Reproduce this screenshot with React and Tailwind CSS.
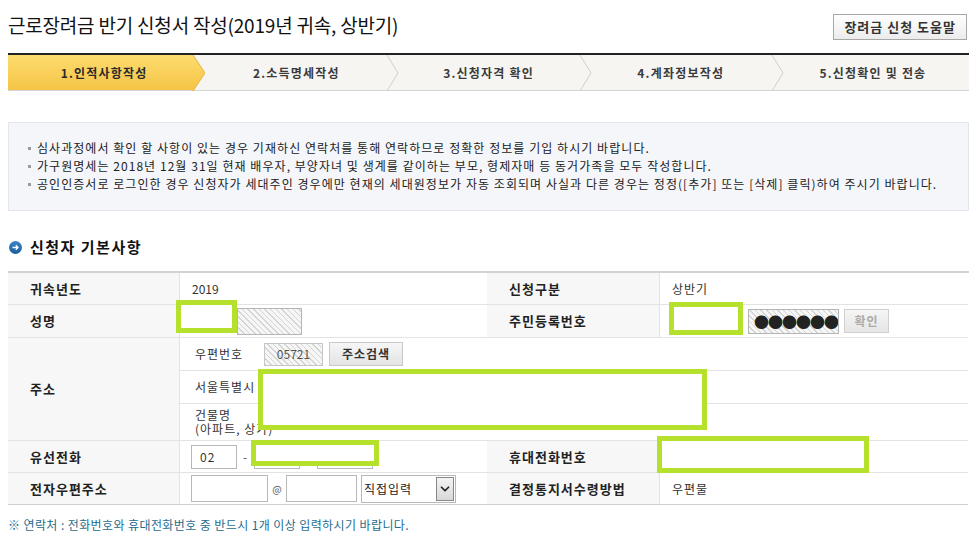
import { ChevronDown } from 'lucide-react';

const font = { fontFamily: '"Noto Sans CJK KR", "Noto Sans", sans-serif' };

const steps = ['1.인적사항작성', '2.소득명세작성', '3.신청자격 확인', '4.계좌정보작성', '5.신청확인 및 전송'];

const hatch =
  'bg-[repeating-linear-gradient(45deg,#d4d4d4_0px,#d4d4d4_1px,#f6f6f6_1px,#f6f6f6_4px)]';

function GreenBox({ className }) {
  return <div className={`absolute border-[5px] border-[#b5e02b] bg-white ${className}`} />;
}

function Label({ children, className = '' }) {
  return (
    <div className={`flex items-center pl-[22px] bg-[#f7f7f7] text-[13px] font-bold tracking-[1px] text-[#222] border-b border-[#e3e3e3] ${className}`}>
      {children}
    </div>
  );
}

function Value({ children, className = '' }) {
  return (
    <div className={`flex items-center px-3 bg-white text-[12px] tracking-[1px] text-[#333] border-b border-[#e3e3e3] ${className}`}>
      {children}
    </div>
  );
}

export default function App() {
  return (
    <div className="relative w-[977px] h-[548px] bg-white overflow-hidden" style={font}>
      {/* Title */}
      <div className="flex items-start justify-between pl-2 pr-[10px] pt-[11px] h-[53px]">
        <h1 className="text-[19px] leading-[28px] text-[#111] tracking-[-0.2px]">
          근로장려금 반기 신청서 작성(2019년 귀속, 상반기)
        </h1>
        <button className="mt-[3px] h-[26px] px-[10px] border border-[#a8a8a8] bg-gradient-to-b from-white to-[#ececec] text-[13px] font-bold text-[#333] tracking-[1px]">
          장려금 신청 도움말
        </button>
      </div>

      {/* Steps */}
      <div className="mx-2 flex h-[38px] border-t-2 border-[#222] border-b border-b-[#d5d5d5] bg-[#f6f5f1]">
        {steps.map((s, i) => (
          <div key={s} className="relative flex-1 flex items-center justify-center">
            {i === 0 && (
              <div className="absolute inset-0 right-[8px] bg-gradient-to-b from-[#fddc6e] to-[#f4c445]" />
            )}
            {i === 0 ? (
              <svg className="absolute top-0 right-[-5px] z-10" width="13" height="36" viewBox="0 0 13 36">
                <defs>
                  <linearGradient id="yg" x1="0" y1="0" x2="0" y2="1">
                    <stop offset="0" stopColor="#fddc6e" />
                    <stop offset="1" stopColor="#f4c445" />
                  </linearGradient>
                </defs>
                <polygon points="0,0 1,0 13,18 1,36 0,36" fill="url(#yg)" />
                <polyline points="1,0 13,18 1,36" fill="none" stroke="#e6b43a" strokeWidth="1" />
              </svg>
            ) : (
              i < 4 && (
                <svg className="absolute top-0 right-[-7px] z-10" width="13" height="36" viewBox="0 0 13 36">
                  <polyline points="1,0 12,18 1,36" fill="none" stroke="#cfcfcf" strokeWidth="1" />
                </svg>
              )
            )}
            <span className={`relative text-[12px] font-bold tracking-[1.2px] ${i === 0 ? 'text-[#2a2a2a]' : 'text-[#3a3a3a]'}`}>{s}</span>
          </div>
        ))}
      </div>

      {/* Info box */}
      <div className="mx-2 mt-[31px] h-[89px] border border-[#e3e6ec] bg-[#f4f6fa] pt-[16px] pl-[19px] text-[12px] leading-[18px] tracking-[1.05px] text-[#222]">
        {[
          '심사과정에서 확인 할 사항이 있는 경우 기재하신 연락처를 통해 연락하므로 정확한 정보를 기입 하시기 바랍니다.',
          '가구원명세는 2018년 12월 31일 현재 배우자, 부양자녀 및 생계를 같이하는 부모, 형제자매 등 동거가족을 모두 작성합니다.',
          '공인인증서로 로그인한 경우 신청자가 세대주인 경우에만 현재의 세대원정보가 자동 조회되며 사실과 다른 경우는 정정([추가] 또는 [삭제] 클릭)하여 주시기 바랍니다.',
        ].map((t) => (
          <div key={t} className="flex items-center gap-[6px] whitespace-nowrap">
            <span className="w-[3px] h-[3px] bg-[#9a9a9a]" />
            <span>{t}</span>
          </div>
        ))}
      </div>

      {/* Section heading */}
      <div className="flex items-center gap-[8px] pl-[9px] mt-[27px] h-[18px]">
        <span className="flex items-center justify-center w-[13px] h-[13px] rounded-full bg-gradient-to-b from-[#3b86c6] to-[#1b5d9c]">
          <svg width="7" height="7" viewBox="0 0 7 7">
            <path d="M0.5 3.5 H6 M3.8 1.3 L6 3.5 L3.8 5.7" stroke="white" strokeWidth="1.3" fill="none" />
          </svg>
        </span>
        <span className="text-[15px] font-bold tracking-[1.5px] text-[#111]">신청자 기본사항</span>
      </div>

      {/* Table */}
      <div className="mx-2 mt-[15px] grid grid-cols-[172px_307px_173px_308px] border-t-2 border-[#d2d2d2]">
        <Label className="h-[32px] border-r border-r-[#e3e3e3]">귀속년도</Label>
        <Value className="h-[32px] tracking-normal">2019</Value>
        <Label className="h-[32px] border-r border-r-[#e3e3e3]">신청구분</Label>
        <Value className="h-[32px]">상반기</Value>

        <Label className="h-[33px] border-r border-r-[#e3e3e3]">성명</Label>
        <Value className="h-[33px]">
          <div className="w-[45px] h-[27px]" />
          <div className={`w-[65px] h-[27px] border border-[#b5b5b5] ${hatch}`} />
        </Value>
        <Label className="h-[33px] border-r border-r-[#e3e3e3]">주민등록번호</Label>
        <Value className="h-[33px] gap-[5px]">
          <div className="w-[71px] h-[25px]" />
          <div className={`w-[91px] h-[25px] border border-[#b5b5b5] ${hatch} overflow-hidden whitespace-nowrap flex items-center pl-[5px] text-[15px] leading-none text-[#222] tracking-[-1px]`}>
            ●●●●●●
          </div>
          <div className="w-[45px] h-[24px] border border-[#d0d0d0] bg-gradient-to-b from-[#f5f5f5] to-[#e6e6e6] flex items-center justify-center text-[12px] font-bold text-[#aaa]">
            확인
          </div>
        </Value>

        <Label className="h-[103px] border-r border-r-[#e3e3e3]">주소</Label>
        <div className="col-span-3 flex flex-col">
          <Value className="h-[33px] pl-[15px]">
            <span className="w-[69px]">우편번호</span>
            <div className={`w-[59px] h-[23px] border border-[#c6c6c6] ${hatch} flex items-center justify-center text-[12px] tracking-normal text-[#555]`}>
              05721
            </div>
            <div className="ml-[6px] w-[74px] h-[24px] border border-[#c8c8c8] bg-gradient-to-b from-[#f6f6f6] to-[#e4e4e4] flex items-center justify-center text-[12px] font-bold text-[#333]">
              주소검색
            </div>
          </Value>
          <Value className="h-[33px] pl-[15px]">서울특별시</Value>
          <Value className="h-[37px] pl-[15px]">
            <div className="leading-[14px]">
              건물명
              <br />
              (아파트, 상가)
            </div>
          </Value>
        </div>

        <Label className="h-[32px] border-r border-r-[#e3e3e3]">유선전화</Label>
        <Value className="h-[32px] pl-[11px]">
          <div className="w-[46px] h-[24px] border border-[#b8b8b8] flex items-center pl-[8px]">02</div>
          <span className="mx-[6px] text-[#555]">-</span>
          <div className="w-[46px] h-[24px] border border-[#b8b8b8]" />
          <span className="mx-[6px] text-[#555]">-</span>
          <div className="w-[56px] h-[24px] border border-[#b8b8b8]" />
        </Value>
        <Label className="h-[32px] border-r border-r-[#e3e3e3]">휴대전화번호</Label>
        <Value className="h-[32px]" />

        <Label className="h-[32px] border-r border-r-[#e3e3e3] border-b-[#cfcfcf]">전자우편주소</Label>
        <Value className="h-[32px] pl-[11px] border-b-[#cfcfcf]">
          <div className="w-[77px] h-[27px] border border-[#b8b8b8]" />
          <span className="w-[18px] text-center text-[10px] tracking-normal text-[#555]">@</span>
          <div className="w-[71px] h-[27px] border border-[#b8b8b8]" />
          <div className="ml-[4px] w-[95px] h-[28px] border border-[#b8b8b8] flex items-center">
            <span className="flex-1 pl-[2px] text-[12px] text-[#222]">직접입력</span>
            <span className="w-[18px] h-[24px] mr-[1px] border border-[#888] bg-gradient-to-b from-[#f4f4f4] to-[#d8d8d8] flex items-center justify-center">
              <ChevronDown size={14} strokeWidth={3} className="text-[#222]" />
            </span>
          </div>
        </Value>
        <Label className="h-[32px] border-r border-r-[#e3e3e3] border-b-[#cfcfcf]">결정통지서수령방법</Label>
        <Value className="h-[32px] border-b-[#cfcfcf]">우편물</Value>
      </div>

      <p className="ml-2 mt-[11px] text-[12px] tracking-[0.4px] text-[#1f6c8c]">
        ※ 연락처 : 전화번호와 휴대전화번호 중 반드시 1개 이상 입력하시기 바랍니다.
      </p>

      {/* Redaction overlays */}
      <GreenBox className="left-[176px] top-[300px] w-[61px] h-[33px]" />
      <GreenBox className="left-[669px] top-[302px] w-[74px] h-[33px]" />
      <GreenBox className="left-[258px] top-[369px] w-[449px] h-[61px]" />
      <GreenBox className="left-[251px] top-[440px] w-[128px] h-[26px]" />
      <GreenBox className="left-[657px] top-[436px] w-[212px] h-[37px]" />
    </div>
  );
}
